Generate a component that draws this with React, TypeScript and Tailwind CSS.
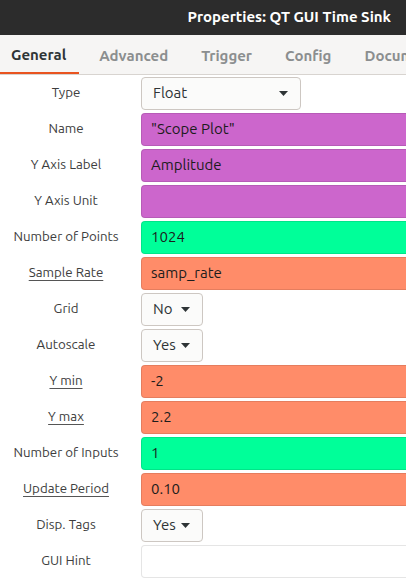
const FONT = "font-['Ubuntu','Noto_Sans',sans-serif]";

type Field =
  | { label: string; kind: "text"; value: string; color: string; link?: boolean }
  | { label: string; kind: "select"; value: string; width: string };

const fields: Field[] = [
  { label: "Type", kind: "select", value: "Float", width: "w-[160px]" },
  { label: "Name", kind: "text", value: '"Scope Plot"', color: "bg-[#cc66cc]" },
  { label: "Y Axis Label", kind: "text", value: "Amplitude", color: "bg-[#cc66cc]" },
  { label: "Y Axis Unit", kind: "text", value: "", color: "bg-[#cc66cc]" },
  { label: "Number of Points", kind: "text", value: "1024", color: "bg-[#00ff99]" },
  { label: "Sample Rate", kind: "text", value: "samp_rate", color: "bg-[#ff8c69]", link: true },
  { label: "Grid", kind: "select", value: "No", width: "w-[62px]" },
  { label: "Autoscale", kind: "select", value: "Yes", width: "w-[62px]" },
  { label: "Y min", kind: "text", value: "-2", color: "bg-[#ff8c69]", link: true },
  { label: "Y max", kind: "text", value: "2.2", color: "bg-[#ff8c69]", link: true },
  { label: "Number of Inputs", kind: "text", value: "1", color: "bg-[#00ff99]" },
  { label: "Update Period", kind: "text", value: "0.10", color: "bg-[#ff8c69]", link: true },
  { label: "Disp. Tags", kind: "select", value: "Yes", width: "w-[62px]" },
  { label: "GUI Hint", kind: "text", value: "", color: "bg-white" },
];

const Caret = () => (
  <svg width="9" height="5" viewBox="0 0 9 5" className="shrink-0">
    <path d="M0 0 L9 0 L4.5 5 Z" fill="#2e3436" />
  </svg>
);

const Row = ({ f }: { f: Field }) => {
  const isLink = f.kind === "text" && f.link;
  return (
    <div className="flex items-center h-[36px]">
      <div className="w-[132px] text-center text-[13.3px] text-[#3d3d3d]">
        <span className={isLink ? "underline underline-offset-[3px] decoration-[#555]" : ""}>
          {f.label}
        </span>
      </div>
      {f.kind === "select" ? (
        <div
          className={`ml-[9px] h-[33px] ${f.width} flex items-center justify-between pl-[11px] pr-[12px] rounded-[4px] border border-[#cdc7c2] bg-[#fbfbfa] text-[15px] text-[#2e3436]`}
        >
          <span>{f.value}</span>
          <Caret />
        </div>
      ) : (
        <div
          className={`ml-[9px] h-[33px] flex-1 -mr-[6px] flex items-center pl-[9px] rounded-[4px] border border-black/10 ${f.color} text-[15px] text-[#1c1c1c]`}
        >
          {f.value}
        </div>
      )}
    </div>
  );
};

export default function App() {
  const tabs = ["General", "Advanced", "Trigger", "Config", "Documentation"];
  return (
    <div className={`w-[406px] h-[585px] overflow-hidden bg-white ${FONT}`}>
      <div className="h-[35px] bg-[#2c2c2c] flex items-center justify-end pr-[15px]">
        <span className="text-white font-bold text-[15px]">Properties: QT GUI Time Sink</span>
      </div>
      <div className="h-[40px] bg-[#f6f5f4] border-b border-[#d8d4d0] flex items-end whitespace-nowrap overflow-hidden">
        {tabs.map((t, i) => (
          <div
            key={t}
            className={
              i === 0
                ? "h-full flex items-center pl-[11px] pr-[13px] border-b-[3px] border-[#e95420] text-[#2e3436] font-bold text-[15px] -mb-px pt-[3px]"
                : "h-full flex items-center ml-[20px] mr-[13px] text-[#8b8e8f] font-bold text-[15px] pt-[3px]"
            }
          >
            {t}
          </div>
        ))}
      </div>
      <div className="flex flex-col">
        {fields.map((f) => (
          <Row key={f.label} f={f} />
        ))}
      </div>
    </div>
  );
}
